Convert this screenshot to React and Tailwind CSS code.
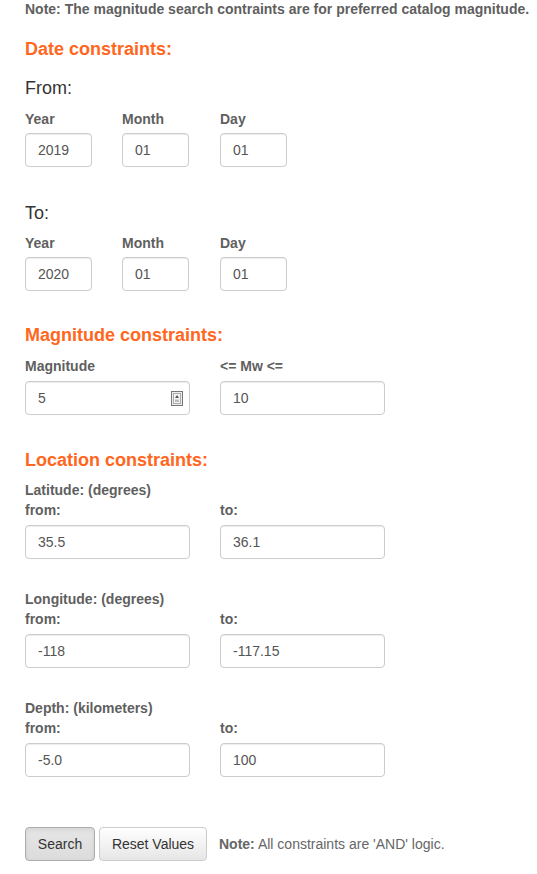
const font = { fontFamily: '"Liberation Sans", Arial, sans-serif' };

function Field({ value, className = "", spinner = false }) {
  return (
    <div
      className={`relative h-[34px] rounded-[4px] border border-[#ccc] bg-white shadow-[inset_0_1px_1px_rgba(0,0,0,0.075)] flex items-center pl-3 text-[14px] text-[#555] ${className}`}
    >
      {value}
      {spinner && (
        <svg className="absolute right-[6px] top-[9px]" width="12" height="15" viewBox="0 0 12 15">
          <rect x="0.5" y="0.5" width="11" height="14" fill="#eee" stroke="#777" />
          <rect x="2.5" y="2.5" width="7" height="10" fill="#f5f5f5" stroke="#aaa" />
          <path d="M6 4 L8 7 L4 7 Z" fill="#555" />
          <rect x="4" y="8.5" width="4" height="2.5" fill="#bbb" />
        </svg>
      )}
    </div>
  );
}

function Label({ children, className = "" }) {
  return (
    <div className={`text-[14px] leading-[20px] font-bold text-[#5f5f5f] ${className}`}>{children}</div>
  );
}

function Heading({ children, className = "" }) {
  return (
    <div className={`text-[18px] leading-[20px] font-bold text-[#ff6620] ${className}`}>{children}</div>
  );
}

function DateRow({ year, month, day }) {
  return (
    <div className="flex">
      <div className="w-[97px]">
        <Label>Year</Label>
        <Field value={year} className="w-[67px] mt-1" />
      </div>
      <div className="w-[98px]">
        <Label>Month</Label>
        <Field value={month} className="w-[67px] mt-1" />
      </div>
      <div className="w-[98px]">
        <Label>Day</Label>
        <Field value={day} className="w-[67px] mt-1" />
      </div>
    </div>
  );
}

function RangeRow({ title, from, to }) {
  return (
    <div>
      <Label>{title}</Label>
      <div className="flex">
        <div className="w-[195px]">
          <Label>from:</Label>
          <Field value={from} className="w-[165px] mt-[5px]" />
        </div>
        <div className="w-[195px]">
          <Label>to:</Label>
          <Field value={to} className="w-[165px] mt-[5px]" />
        </div>
      </div>
    </div>
  );
}

export default function App() {
  return (
    <div className="min-h-screen bg-white pl-[25px] pb-4" style={font}>
      <div className="text-[14px] leading-[18px] font-bold text-[#5f5f5f] whitespace-nowrap">
        Note: The magnitude search contraints are for preferred catalog magnitude.
      </div>

      <Heading className="mt-[21px]">Date constraints:</Heading>
      <div className="mt-[19px] text-[18px] leading-[20px] text-[#333]">From:</div>
      <div className="mt-[11px]">
        <DateRow year="2019" month="01" day="01" />
      </div>

      <div className="mt-[36px] text-[18px] leading-[20px] text-[#333]">To:</div>
      <div className="mt-[10px]">
        <DateRow year="2020" month="01" day="01" />
      </div>

      <Heading className="mt-[34px]">Magnitude constraints:</Heading>
      <div className="mt-[11px] flex">
        <div className="w-[195px]">
          <Label>Magnitude</Label>
          <Field value="5" spinner className="w-[165px] mt-[5px]" />
        </div>
        <div className="w-[195px]">
          <Label>&lt;= Mw &lt;=</Label>
          <Field value="10" className="w-[165px] mt-[5px]" />
        </div>
      </div>

      <Heading className="mt-[35px]">Location constraints:</Heading>
      <div className="mt-[10px]">
        <RangeRow title="Latitude: (degrees)" from="35.5" to="36.1" />
      </div>
      <div className="mt-[30px]">
        <RangeRow title="Longitude: (degrees)" from="-118" to="-117.15" />
      </div>
      <div className="mt-[30px]">
        <RangeRow title="Depth: (kilometers)" from="-5.0" to="100" />
      </div>

      <div className="mt-[50px] flex items-center">
        <button className="h-[34px] w-[70px] rounded-[4px] border border-[#adadad] bg-gradient-to-b from-[#e6e6e6] to-[#dcdcdc] shadow-[inset_0_2px_4px_rgba(0,0,0,0.08)] text-[14px] text-[#333]">
          Search
        </button>
        <button className="ml-1 h-[34px] w-[108px] rounded-[4px] border border-[#ccc] bg-gradient-to-b from-white to-[#e6e6e6] text-[14px] text-[#333]">
          Reset Values
        </button>
        <div className="ml-3 text-[14px] text-[#666]">
          <span className="font-bold">Note:</span> All constraints are 'AND' logic.
        </div>
      </div>
    </div>
  );
}
